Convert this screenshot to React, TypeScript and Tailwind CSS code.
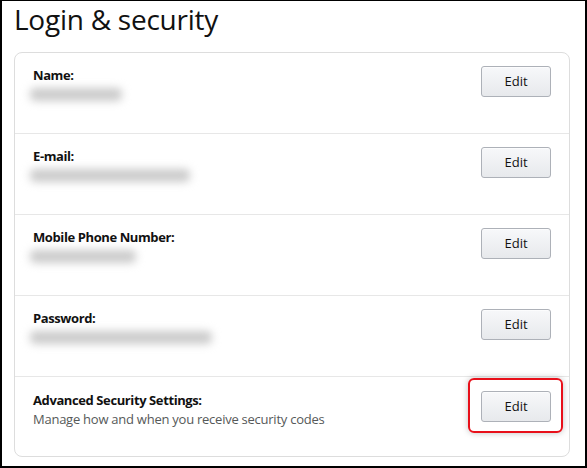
import React from "react";

const rows = [
  { label: "Name:", blur: 92 },
  { label: "E-mail:", blur: 160 },
  { label: "Mobile Phone Number:", blur: 106 },
  { label: "Password:", blur: 182 },
];

function EditButton() {
  return (
    <button className="w-[70px] h-[31px] rounded-[3px] border border-[#adb1b8] bg-gradient-to-b from-[#f7f8fa] to-[#e7e9ec] text-[13px] text-[#111] shadow-[inset_0_1px_0_rgba(255,255,255,0.6)] leading-none">
      Edit
    </button>
  );
}

export default function App() {
  return (
    <div
      className="w-[587px] h-[468px] bg-white border-t border-l-2 border-r-2 border-b-2 border-black overflow-hidden pl-[12px] pr-[15px]"
      style={{ fontFamily: '"Open Sans", "Noto Sans", Arial, sans-serif' }}
    >
      <h1 className="text-[28px] leading-[34px] text-[#111] font-normal pt-[1px] h-[51px] tracking-[-0.25px]">
        Login &amp; security
      </h1>
      <div className="border border-[#dddddd] rounded-[8px]">
        {rows.map((r, i) => (
          <div
            key={r.label}
            className={`flex justify-between pl-[18px] pr-[18px] pt-[13px] ${
              i === 0 ? "h-[80px]" : "h-[81px] border-t border-[#e7e7e7]"
            }`}
          >
            <div className="flex flex-col">
              <div className="text-[13px] leading-[19px] font-bold text-[#111] tracking-[-0.4px]">
                {r.label}
              </div>
              <div className="h-[19px] flex items-center -ml-[3px]">
                <div
                  className="h-[13px] bg-[#cbcbcb] rounded-[5px] blur-[4px]"
                  style={{ width: r.blur }}
                />
              </div>
            </div>
            <EditButton />
          </div>
        ))}
        <div className="flex justify-between pl-[18px] pr-[18px] pt-[14px] h-[80px] border-t border-[#e7e7e7]">
          <div className="flex flex-col">
            <div className="text-[13px] leading-[19px] font-bold text-[#111] tracking-[-0.4px]">
              Advanced Security Settings:
            </div>
            <div className="text-[13px] leading-[19px] text-[#565959] tracking-[-0.25px]">
              Manage how and when you receive security codes
            </div>
          </div>
          <div className="relative h-[31px]">
            <div className="absolute top-[-13px] left-[-13px] right-[-12px] bottom-[-11px] rounded-[6px] border-2 border-[#e8101a] shadow-[0_0_6px_rgba(0,0,0,0.25)]" />
            <EditButton />
          </div>
        </div>
      </div>
    </div>
  );
}
